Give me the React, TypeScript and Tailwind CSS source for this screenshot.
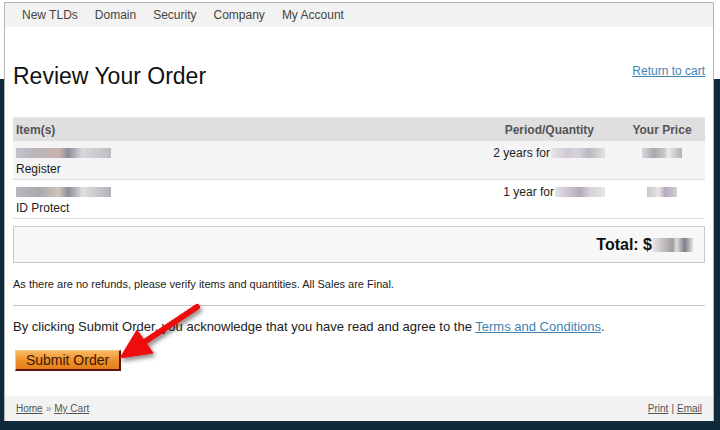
import React from "react";

const navItems = ["New TLDs", "Domain", "Security", "Company", "My Account"];

const Blur = ({ className }: { className: string }) => (
  <span className={`inline-block align-middle h-[10px] ${className}`}></span>
);

const App = () => {
  return (
    <div className="relative h-[430px] w-[720px] overflow-hidden bg-[linear-gradient(to_bottom,#ffffff_79px,#0f2b3b_79px)] font-['Liberation_Sans',Arial,sans-serif] text-[#222]">
      <div className="pt-[2px] pl-[4px]">
        <div className="w-[710px] h-[419px] bg-white border-t border-l border-r border-[#b5b5b5] flex flex-col">
          {/* top nav */}
          <div className="h-[24px] bg-[#f2f2f2] flex items-center gap-[17px] pl-[17px] text-[12px] text-[#444]">
            {navItems.map((n) => (
              <span key={n}>{n}</span>
            ))}
          </div>

          <div className="px-[8px] flex flex-col">
            <div className="flex justify-between items-start mt-[35px]">
              <h1 className="text-[23px] leading-[28px] text-[#111]">Review Your Order</h1>
              <a href="#" className="mt-[2px] text-[12px] leading-[14px] text-[#3f82b4] underline">
                Return to cart
              </a>
            </div>

            {/* order table */}
            <div className="mt-[27px] text-[12px]">
              <div className="flex h-[24px] items-center bg-[#dfdfdf] border-t border-[#ebebeb] font-bold text-[#555]">
                <div className="flex-1 pl-[3px]">Item(s)</div>
                <div className="w-[200px] text-right pr-[11px]">Period/Quantity</div>
                <div className="w-[100px] text-center pl-[14px]">Your Price</div>
              </div>

              <div className="flex h-[39px] bg-[#f4f4f4] border-b border-[#dcdcdc] pt-[4px]">
                <div className="flex-1 pl-[3px] leading-[16px]">
                  <div className="h-[16px] flex items-center">
                    <Blur className="w-[95px] bg-[linear-gradient(90deg,#c4c2c8,#b8b6bc_20%,#c9b3ad_45%,#8e8d98_55%,#d9d8dc_70%,#bdbcc2)]" />
                  </div>
                  <div>Register</div>
                </div>
                <div className="w-[200px] flex justify-end items-start leading-[16px]">
                  <span>2 years for</span>
                  <Blur className="ml-[1px] mt-[3px] w-[54px] bg-[linear-gradient(90deg,#e6e5e8,#cfc9d2_30%,#d8d2dc_50%,#b9b8bd_70%,#e2e1e4)]" />
                </div>
                <div className="w-[100px] flex justify-center pl-[14px] pt-[3px]">
                  <Blur className="w-[40px] bg-[linear-gradient(90deg,#d8d7da,#aaa8ae_30%,#c5c4c9_55%,#ebebeb_65%,#b0afb5)]" />
                </div>
              </div>

              <div className="flex h-[39px] bg-white border-b border-[#dcdcdc] pt-[4px]">
                <div className="flex-1 pl-[3px] leading-[16px]">
                  <div className="h-[16px] flex items-center">
                    <Blur className="w-[95px] bg-[linear-gradient(90deg,#b9b8bd,#a9a8ae_25%,#d2c3bd_45%,#8f8c95_55%,#dedde0_70%,#b4b3b9)]" />
                  </div>
                  <div>ID Protect</div>
                </div>
                <div className="w-[200px] flex justify-end items-start leading-[16px]">
                  <span>1 year for</span>
                  <Blur className="ml-[1px] mt-[3px] w-[50px] bg-[linear-gradient(90deg,#e4e3e6,#c9c0cc_30%,#b6a8be_50%,#d4d3d8_70%,#e6e6e8)]" />
                </div>
                <div className="w-[100px] flex justify-center pl-[14px] pt-[3px]">
                  <Blur className="w-[30px] bg-[linear-gradient(90deg,#cbc5c9,#e6e5e7_40%,#b5a7bd_60%,#d2d1d6)]" />
                </div>
              </div>
            </div>

            {/* total */}
            <div className="mt-[7px] h-[37px] border border-[#c9c9c9] bg-[#f7f7f7] flex items-center justify-end pr-[11px]">
              <span className="text-[16px] font-bold text-[#111]">Total: $</span>
              <Blur className="h-[14px] w-[41px] bg-[linear-gradient(90deg,#e8e8ea,#c5c3c7_25%,#a49a9c_50%,#dcdcdf_60%,#7f7d85_80%,#e4e4e6)]" />
            </div>

            <p className="mt-[15px] text-[11px] leading-[13px] text-[#222]">
              As there are no refunds, please verify items and quantities. All Sales are Final.
            </p>

            <div className="mt-[14px] border-t border-[#c8c8c8]"></div>

            <p className="mt-[13px] text-[13px] leading-[15px] text-[#222]">
              By clicking Submit Order, you acknowledge that you have read and agree to the{" "}
              <a href="#" className="text-[#3f82b4] underline">
                Terms and Conditions
              </a>
              .
            </p>

            <div className="mt-[14px] pl-[2px]">
              <button className="h-[21px] w-[106px] text-[14px] leading-[18px] text-[#3b1805] bg-[linear-gradient(to_bottom,#fbb862,#ee8f28_55%,#e57f1a)] border border-[#f6c98a] border-r-2 border-b-2 border-r-[#5c1408] border-b-[#5c1408]">
                Submit Order
              </button>
            </div>
          </div>

          {/* footer */}
          <div className="mt-auto h-[25px] bg-[#f2f2f2] flex items-center justify-between px-[11px] text-[10px] text-[#555]">
            <div>
              <a href="#" className="underline">Home</a>
              <span className="mx-[3px] text-[#888]">»</span>
              <a href="#" className="underline">My Cart</a>
            </div>
            <div>
              <a href="#" className="underline">Print</a>
              <span className="mx-[3px]">|</span>
              <a href="#" className="underline">Email</a>
            </div>
          </div>
        </div>
      </div>

      {/* red annotation arrow */}
      <svg
        className="absolute left-0 top-0 pointer-events-none"
        width="720"
        height="430"
        viewBox="0 0 720 430"
      >
        <defs>
          <filter id="sh" x="-50%" y="-50%" width="200%" height="200%">
            <feDropShadow dx="2" dy="3" stdDeviation="2" floodColor="#000" floodOpacity="0.45" />
          </filter>
        </defs>
        <g filter="url(#sh)" fill="#ee0d0d" stroke="#ee0d0d">
          <line x1="197" y1="307" x2="143" y2="343" strokeWidth="6" strokeLinecap="round" />
          <polygon points="120,358 137,330 153,353" strokeWidth="1" strokeLinejoin="round" />
        </g>
      </svg>
    </div>
  );
};

export default App;
